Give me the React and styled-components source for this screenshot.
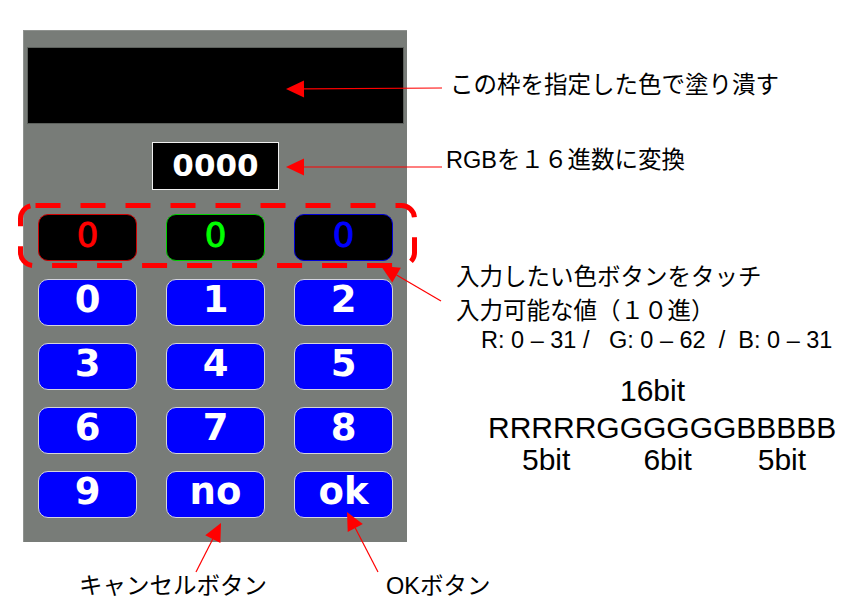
import React from "react";
import styled, { createGlobalStyle } from "styled-components";

const GlobalStyle = createGlobalStyle`
  html, body {
    margin: 0;
    padding: 0;
    background: #ffffff;
  }
`;

const JP = `"Liberation Sans", "Noto Sans CJK JP", sans-serif`;
const LCD = `"DejaVu Sans", "Liberation Sans", sans-serif`;

const Page = styled.div`
  position: relative;
  width: 854px;
  height: 612px;
  display: flex;
  flex-direction: column;
  background: #ffffff;
  overflow: hidden;
  color: #000;
  font-family: ${JP};
`;

const TopRow = styled.div`
  display: flex;
  align-items: flex-start;
`;

const LeftColumn = styled.div`
  width: 446px;
  flex-shrink: 0;
  box-sizing: border-box;
  padding: 30px 0 0 23px;
`;

/* the touch panel device */
const Panel = styled.div`
  width: 384px;
  height: 512px;
  box-sizing: border-box;
  padding: 17px 3px 0 4px;
  display: flex;
  flex-direction: column;
  background: #787c78;
  box-shadow: inset 1px 1px 0 #8f928f;
`;

const Swatch = styled.div`
  height: 77px;
  box-sizing: border-box;
  background: #000;
  border: 1px solid #5c605c;
`;

const HexBox = styled.div`
  align-self: center;
  margin-top: 18px;
  width: 127px;
  height: 48px;
  box-sizing: border-box;
  background: #000;
  border: 1px solid #f0f0f0;
  display: flex;
  align-items: center;
  justify-content: center;
  color: #fff;
  font-family: ${LCD};
  font-weight: bold;
  font-size: 31px;
  line-height: 1;
  padding-bottom: 2px;
`;

const KeyGrid = styled.div`
  display: grid;
  grid-template-columns: repeat(3, 99px);
  grid-auto-rows: 47px;
  column-gap: 29px;
  row-gap: 17px;
  justify-content: center;
  margin-top: ${(p) => p.$top}px;
`;

const ColorKey = styled.div`
  box-sizing: border-box;
  border-radius: 10px;
  background: #000;
  border: 1.5px solid ${(p) => p.$edge};
  color: ${(p) => p.$ink};
  display: flex;
  align-items: center;
  justify-content: center;
  font-family: ${LCD};
  font-size: 34px;
  line-height: 1;
  -webkit-text-stroke: 0.9px ${(p) => p.$ink};
  padding-bottom: 5px;
`;

const Key = styled.div`
  box-sizing: border-box;
  border-radius: 10px;
  background: #0000ff;
  border: 1.5px solid #d4d4de;
  color: #fff;
  display: flex;
  align-items: center;
  justify-content: center;
  font-family: ${LCD};
  font-weight: bold;
  font-size: 37px;
  line-height: 1;
  padding-bottom: 7px;
`;

const RightColumn = styled.div`
  display: flex;
  flex-direction: column;
  align-items: flex-start;
`;

const Note = styled.div`
  margin-top: ${(p) => p.$mt}px;
  margin-left: ${(p) => p.$ml}px;
  font-size: 23.5px;
  line-height: ${(p) => p.$lh || 32}px;
  white-space: nowrap;
`;

const Ranges = styled.div`
  margin-left: 35px;
  font-family: "Liberation Sans", sans-serif;
  font-size: 23.5px;
  line-height: 24px;
  white-space: pre;
`;

const BitText = styled.div`
  margin-top: ${(p) => p.$mt || 0}px;
  margin-left: ${(p) => p.$ml || 0}px;
  font-family: "Liberation Sans", sans-serif;
  font-size: 30px;
  line-height: 32px;
  white-space: nowrap;
`;

const BitRow = styled.div`
  display: flex;
`;

const CaptionRow = styled.div`
  display: flex;
  margin-top: 28px;
  padding-left: 79px;
`;

const Caption = styled.div`
  margin-left: ${(p) => p.$ml || 0}px;
  flex-shrink: 0;
  font-size: 23.5px;
  line-height: 32px;
  white-space: nowrap;
`;

const Overlay = styled.svg`
  position: absolute;
  left: 0;
  top: 0;
  width: 854px;
  height: 612px;
  pointer-events: none;
`;

const RED = "#ff0000";

function Arrow({ from, to, len = 18, half = 8.5 }) {
  const [fx, fy] = from;
  const [tx, ty] = to;
  const dx = tx - fx;
  const dy = ty - fy;
  const d = Math.hypot(dx, dy);
  const ux = dx / d;
  const uy = dy / d;
  const bx = tx - ux * len;
  const by = ty - uy * len;
  const px = -uy;
  const py = ux;
  const pts = [
    [tx, ty],
    [bx + px * half, by + py * half],
    [bx - px * half, by - py * half],
  ]
    .map((p) => p.join(","))
    .join(" ");
  return (
    <g>
      <line x1={fx} y1={fy} x2={bx} y2={by} stroke={RED} strokeWidth="1.2" />
      <polygon points={pts} fill={RED} />
    </g>
  );
}

const keys = ["0", "1", "2", "3", "4", "5", "6", "7", "8", "9", "no", "ok"];
const channels = [
  { edge: "#d00000", ink: "#ff0000" },
  { edge: "#00d000", ink: "#00ff00" },
  { edge: "#0000d8", ink: "#0000ff" },
];

export default function App() {
  return (
    <>
      <GlobalStyle />
      <Page>
        <TopRow>
          <LeftColumn>
            <Panel>
              <Swatch />
              <HexBox>0000</HexBox>
              <KeyGrid $top={24}>
                {channels.map((c, i) => (
                  <ColorKey key={i} $edge={c.edge} $ink={c.ink}>
                    0
                  </ColorKey>
                ))}
              </KeyGrid>
              <KeyGrid $top={18}>
                {keys.map((k) => (
                  <Key key={k}>{k}</Key>
                ))}
              </KeyGrid>
            </Panel>
          </LeftColumn>
          <RightColumn>
            <Note $mt={69} $ml={4}>
              この枠を指定した色で塗り潰す
            </Note>
            <Note $mt={43} $ml={0}>
              RGBを１６進数に変換
            </Note>
            <Note $mt={84} $ml={10} $lh={34}>
              入力したい色ボタンをタッチ
              <br />
              入力可能な値（１０進）
            </Note>
            <Ranges>{"R: 0 – 31 /   G: 0 – 62  /  B: 0 – 31"}</Ranges>
            <BitText $mt={23} $ml={174}>
              16bit
            </BitText>
            <BitText $mt={5} $ml={42}>
              RRRRRGGGGGGBBBBB
            </BitText>
            <BitRow>
              <BitText $ml={76}>5bit</BitText>
              <BitText $ml={73}>6bit</BitText>
              <BitText $ml={66}>5bit</BitText>
            </BitRow>
          </RightColumn>
        </TopRow>
        <CaptionRow>
          <Caption>キャンセルボタン</Caption>
          <Caption $ml={119}>OKボタン</Caption>
        </CaptionRow>
        <Overlay viewBox="0 0 854 612">
          <rect
            x="20.5"
            y="205.5"
            width="394"
            height="60"
            rx="13"
            fill="none"
            stroke={RED}
            strokeWidth="5"
            strokeDasharray="25 20"
            strokeDashoffset="-2"
          />
          <Arrow from={[442, 88]} to={[286, 89]} />
          <Arrow from={[442, 167]} to={[286, 167]} />
          <Arrow from={[441, 301]} to={[381, 266]} />
          <Arrow from={[196, 572]} to={[221, 523]} />
          <Arrow from={[378, 572]} to={[347, 512]} />
        </Overlay>
      </Page>
    </>
  );
}
